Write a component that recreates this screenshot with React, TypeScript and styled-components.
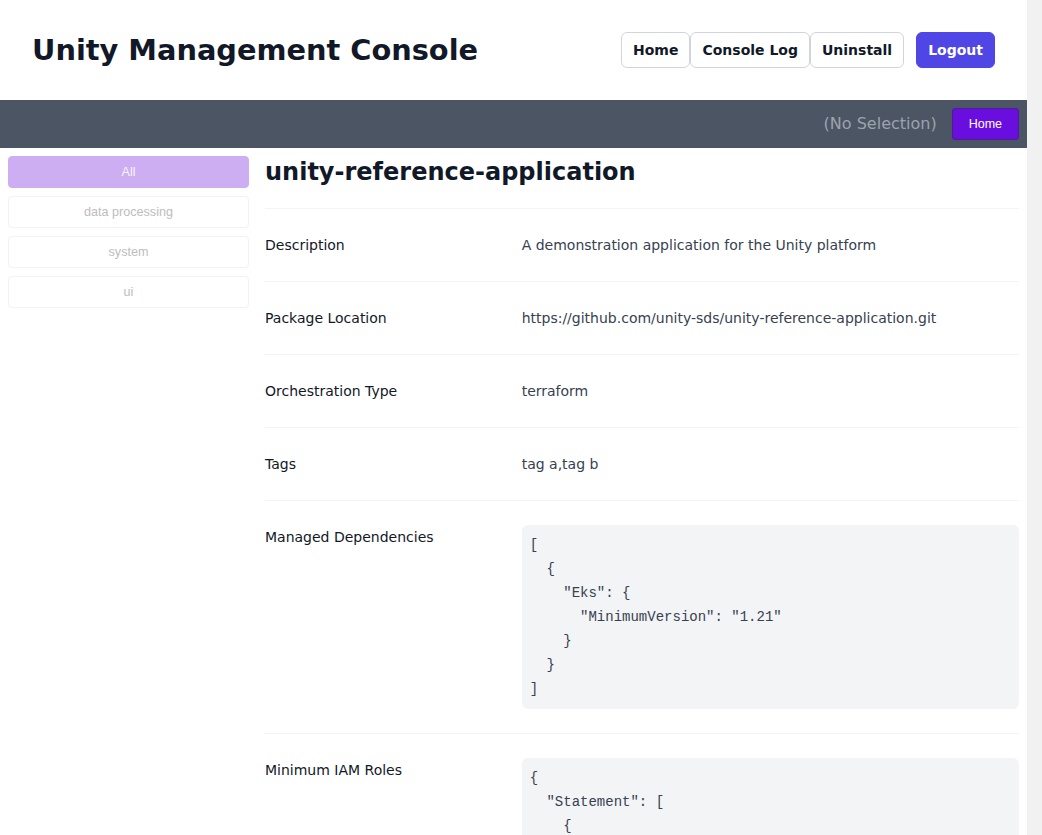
import React from "react";
import styled, { createGlobalStyle } from "styled-components";

const GlobalStyle = createGlobalStyle`
  *, *::before, *::after { box-sizing: border-box; }
  html, body { margin: 0; padding: 0; background: #f1f1f1; }
  body {
    font-family: "DejaVu Sans", sans-serif;
    color: #111827;
  }
`;

const Page = styled.div`
  width: calc(100vw - 15px);
  background: #ffffff;
  display: flex;
  flex-direction: column;
`;

const Header = styled.header`
  height: 100px;
  display: flex;
  align-items: center;
  justify-content: space-between;
  padding: 0 32px;
`;

const Title = styled.h1`
  margin: 0;
  font-size: 28.8px;
  line-height: 36px;
  font-weight: 700;
  color: #111827;
`;

const Nav = styled.nav`
  display: flex;
  align-items: center;
`;

const NavGroup = styled.div`
  display: flex;
`;

const NavButton = styled.button<{ $primary?: boolean }>`
  height: 36px;
  padding: 0 11px;
  border: 1px solid ${(p) => (p.$primary ? "#4f46e5" : "#d1d5db")};
  border-radius: 6px;
  background: ${(p) => (p.$primary ? "#4f46e5" : "#ffffff")};
  color: ${(p) => (p.$primary ? "#ffffff" : "#111827")};
  font-family: "DejaVu Sans", sans-serif;
  font-size: 14px;
  font-weight: 700;
  line-height: 20px;
  margin-left: ${(p) => (p.$primary ? "12px" : "0")};
  cursor: pointer;
`;

const SubBar = styled.div`
  height: 48px;
  background: #4b5563;
  display: flex;
  align-items: center;
  justify-content: flex-end;
  gap: 15px;
  padding: 8px;
`;

const Selection = styled.span`
  font-size: 16px;
  line-height: 24px;
  color: #9ca3af;
`;

const BarButton = styled.button`
  height: 32px;
  padding: 0 16px;
  border: 1px solid #4c1d95;
  border-radius: 3px;
  background: #6a0ddf;
  color: #ffffff;
  font-family: "Liberation Sans", Arial, sans-serif;
  font-size: 12.5px;
`;

const Main = styled.div`
  display: flex;
  align-items: flex-start;
  gap: 16px;
  padding: 8px;
`;

const Sidebar = styled.aside`
  width: 241px;
  flex-shrink: 0;
  display: flex;
  flex-direction: column;
  gap: 8px;
`;

const TagButton = styled.button<{ $active?: boolean }>`
  height: 32px;
  width: 100%;
  border: 1px solid ${(p) => (p.$active ? "#ceaef3" : "#f2f2f2")};
  border-radius: 4px;
  background: ${(p) => (p.$active ? "#ceaef3" : "#ffffff")};
  color: ${(p) => (p.$active ? "#f8f3ff" : "#bdbdbd")};
  font-family: "Liberation Sans", Arial, sans-serif;
  font-size: 12.6px;
`;

const Content = styled.section`
  flex: 1;
  min-width: 0;
`;

const AppName = styled.h2`
  margin: 0 0 20px;
  font-size: 24px;
  line-height: 32px;
  font-weight: 700;
  color: #111827;
`;

const List = styled.dl`
  margin: 0;
  border-top: 1px solid #f3f4f6;
`;

const Row = styled.div`
  display: grid;
  grid-template-columns: repeat(3, 1fr);
  gap: 16px;
  padding: 24px 0;
  border-bottom: 1px solid #f3f4f6;
`;

const Label = styled.dt`
  font-size: 14px;
  line-height: 24px;
  color: #111827;
`;

const Value = styled.dd`
  grid-column: span 2;
  margin: 0;
  font-size: 14px;
  line-height: 24px;
  color: #374151;
  min-width: 0;
`;

const Code = styled.pre`
  margin: 0;
  padding: 8px;
  background: #f3f4f6;
  border-radius: 6px;
  font-family: "Liberation Mono", monospace;
  font-size: 14px;
  line-height: 24px;
  color: #374151;
  white-space: pre;
  overflow: hidden;
`;

const dependencies = [{ Eks: { MinimumVersion: "1.21" } }];

const services = [
  "ec2", "s3", "iam", "eks", "sts", "sqs", "sns", "lambda", "logs", "cloudwatch",
  "dynamodb", "kms", "ssm", "elasticloadbalancing", "autoscaling", "route53",
  "apigateway", "ecr", "ecs", "cloudformation", "secretsmanager", "events",
  "states", "elasticfilesystem",
];
const actions = [
  "Create*", "Delete*", "Describe*", "Get*", "List*", "Put*", "Update*", "Tag*",
  "Untag*", "Attach*", "Detach*", "Modify*", "Add*", "Remove*", "Set*", "Start*",
  "Stop*", "Associate*", "Disassociate*", "Enable*", "Disable*", "Register*",
  "Deregister*", "Run*", "Publish*", "Invoke*", "Pass*", "Assume*", "Encrypt*",
];

const iamRoles = {
  Statement: services.map((svc) => ({
    Effect: "Allow",
    Action: actions.map((a) => `${svc}:${a}`),
    Resource: "*",
  })),
  Version: "2012-10-17",
};

const tags = ["All", "data processing", "system", "ui"];

export default function App() {
  return (
    <Page>
      <GlobalStyle />
      <Header>
        <Title>Unity Management Console</Title>
        <Nav>
          <NavGroup>
            <NavButton>Home</NavButton>
            <NavButton>Console Log</NavButton>
            <NavButton>Uninstall</NavButton>
          </NavGroup>
          <NavButton $primary>Logout</NavButton>
        </Nav>
      </Header>
      <SubBar>
        <Selection>(No Selection)</Selection>
        <BarButton>Home</BarButton>
      </SubBar>
      <Main>
        <Sidebar>
          {tags.map((t, i) => (
            <TagButton key={t} $active={i === 0}>
              {t}
            </TagButton>
          ))}
        </Sidebar>
        <Content>
          <AppName>unity-reference-application</AppName>
          <List>
            <Row>
              <Label>Description</Label>
              <Value>A demonstration application for the Unity platform</Value>
            </Row>
            <Row>
              <Label>Package Location</Label>
              <Value>https://github.com/unity-sds/unity-reference-application.git</Value>
            </Row>
            <Row>
              <Label>Orchestration Type</Label>
              <Value>terraform</Value>
            </Row>
            <Row>
              <Label>Tags</Label>
              <Value>tag a,tag b</Value>
            </Row>
            <Row>
              <Label>Managed Dependencies</Label>
              <Value>
                <Code>{JSON.stringify(dependencies, null, 2)}</Code>
              </Value>
            </Row>
            <Row>
              <Label>Minimum IAM Roles</Label>
              <Value>
                <Code>{JSON.stringify(iamRoles, null, 2)}</Code>
              </Value>
            </Row>
          </List>
        </Content>
      </Main>
    </Page>
  );
}
